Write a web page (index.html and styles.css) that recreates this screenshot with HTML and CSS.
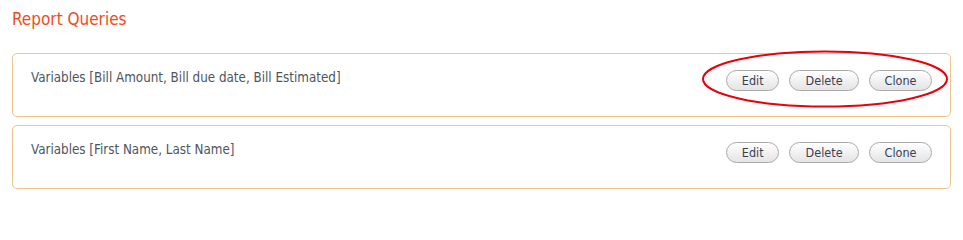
FILE: index.html
```html
<!DOCTYPE html>
<html>
<head>
<meta charset="utf-8">
<link rel="stylesheet" href="styles.css">
</head>
<body>
<div class="page">
  <h1 class="title">Report Queries</h1>
  <div class="list">
    <div class="card">
      <div class="vars">Variables [Bill Amount, Bill due date, Bill Estimated]</div>
      <div class="actions">
        <button class="btn">Edit</button>
        <button class="btn">Delete</button>
        <button class="btn">Clone</button>
      </div>
    </div>
    <div class="card">
      <div class="vars">Variables [First Name, Last Name]</div>
      <div class="actions">
        <button class="btn">Edit</button>
        <button class="btn">Delete</button>
        <button class="btn">Clone</button>
      </div>
    </div>
  </div>
  <svg class="mark" width="250" height="60" viewBox="0 0 250 60">
    <ellipse cx="124" cy="29" rx="122" ry="27.5" fill="none" stroke="#e8000b" stroke-width="2"/>
  </svg>
</div>
</body>
</html>
```

FILE: styles.css
```css
html, body {
  margin: 0;
  padding: 0;
  background: #fff;
}
.page {
  position: relative;
  padding: 9px 12px 0 12px;
  font-family: "DejaVu Sans Condensed", "Liberation Sans", sans-serif;
}
.title {
  margin: 0 0 24px 0;
  font-size: 17px;
  font-weight: normal;
  line-height: 20px;
  color: #f24a1c;
}
.list {
  display: flex;
  flex-direction: column;
  gap: 8px;
  width: 939px;
}
.card {
  box-sizing: border-box;
  height: 64px;
  border: 1px solid #efc48c;
  border-radius: 5px;
  display: flex;
  justify-content: space-between;
  align-items: flex-start;
  padding: 14px 18px 0 18px;
}
.vars {
  font-size: 13.3px;
  line-height: 19px;
  color: #4e5560;
}
.actions {
  display: flex;
  gap: 10px;
  padding-top: 2px;
}
.btn {
  box-sizing: border-box;
  height: 21px;
  padding: 0 14.5px;
  border: 1px solid #a9a9a9;
  border-radius: 11px;
  background: linear-gradient(#ffffff, #e4e4e4);
  font-family: "DejaVu Sans Condensed", "Liberation Sans", sans-serif;
  font-size: 12.5px;
  color: #3a3f55;
  line-height: 19px;
}
.btn:nth-child(2) { padding: 0 15.5px; }
.mark {
  position: absolute;
  left: 701px;
  top: 50px;
}
```
